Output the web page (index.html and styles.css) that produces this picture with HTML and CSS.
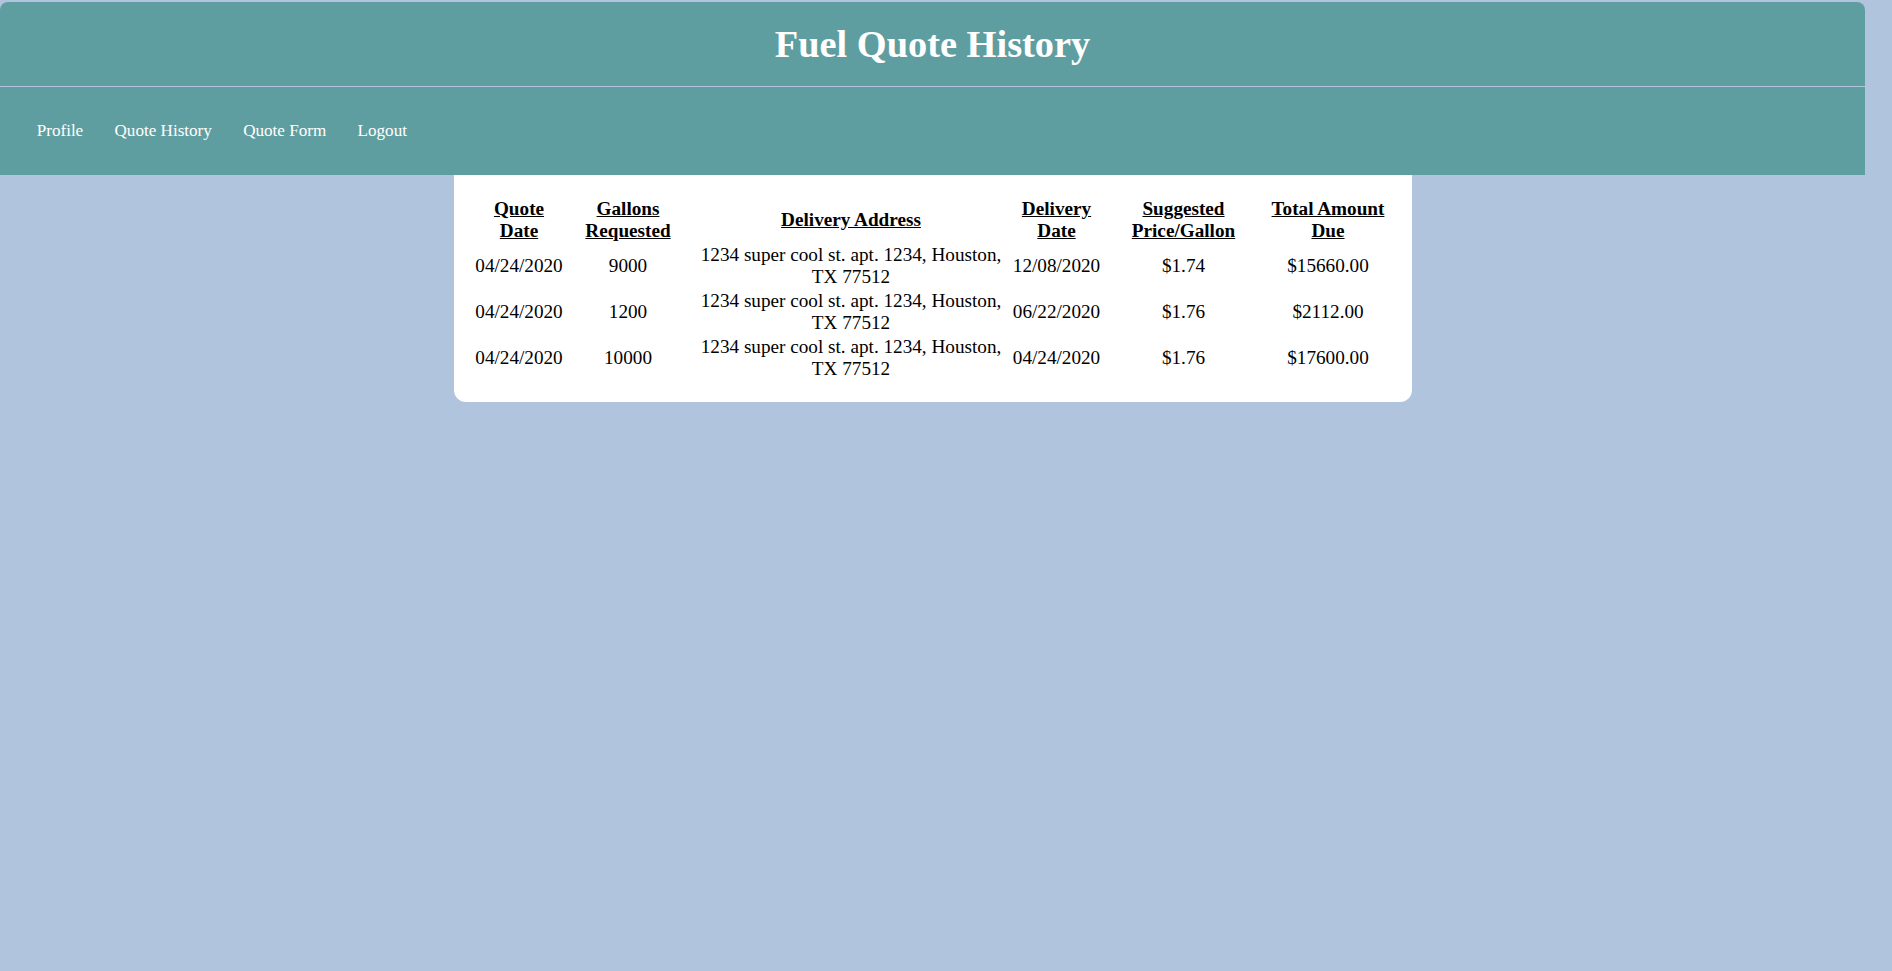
FILE: index.html
```html
<!DOCTYPE html>
<html lang="en">
<head>
<meta charset="utf-8">
<title>Fuel Quote History</title>
<link rel="stylesheet" href="styles.css">
</head>
<body>
<div class="page">
  <header class="site-header">
    <h1 class="title">Fuel Quote History</h1>
    <nav class="nav">
      <a href="#">Profile</a>
      <a href="#">Quote History</a>
      <a href="#">Quote Form</a>
      <a href="#">Logout</a>
    </nav>
  </header>
  <main class="card">
    <table class="history">
      <colgroup>
        <col class="col-qdate">
        <col class="col-gallons">
        <col class="col-address">
        <col class="col-ddate">
        <col class="col-price">
        <col class="col-total">
      </colgroup>
      <thead>
        <tr>
          <th>Quote Date</th>
          <th>Gallons Requested</th>
          <th>Delivery Address</th>
          <th>Delivery Date</th>
          <th>Suggested Price/Gallon</th>
          <th>Total Amount Due</th>
        </tr>
      </thead>
      <tbody>
        <tr>
          <td>04/24/2020</td>
          <td>9000</td>
          <td>1234 super cool st. apt. 1234, Houston, TX 77512</td>
          <td>12/08/2020</td>
          <td>$1.74</td>
          <td>$15660.00</td>
        </tr>
        <tr>
          <td>04/24/2020</td>
          <td>1200</td>
          <td>1234 super cool st. apt. 1234, Houston, TX 77512</td>
          <td>06/22/2020</td>
          <td>$1.76</td>
          <td>$2112.00</td>
        </tr>
        <tr>
          <td>04/24/2020</td>
          <td>10000</td>
          <td>1234 super cool st. apt. 1234, Houston, TX 77512</td>
          <td>04/24/2020</td>
          <td>$1.76</td>
          <td>$17600.00</td>
        </tr>
      </tbody>
    </table>
  </main>
</div>
</body>
</html>
```
FILE: styles.css
```css
html, body {
  margin: 0;
  background: #b0c4de;
}

body {
  font-family: "Liberation Serif", "Times New Roman", serif;
  min-height: 100vh;
  color: #000;
}

.page {
  margin-right: 27px;
  padding-top: 2px;
}

.site-header {
  background: #5f9ea0;
  border-radius: 8px 8px 0 0;
}

.title {
  margin: 0;
  padding: 20px 0;
  text-align: center;
  font-size: 38.4px;
  font-weight: bold;
  line-height: normal;
  color: #fff;
  border-bottom: 1px solid #b0c4de;
}

.nav {
  display: flex;
  gap: 31.3px;
  padding: 34px 0 34px 36.7px;
}

.nav a {
  color: #fff;
  text-decoration: none;
  font-size: 17.1px;
  line-height: normal;
}

.card {
  display: block;
  width: 958px;
  box-sizing: border-box;
  margin: 0 auto;
  padding: 22px 20px 21px;
  background: #fff;
  border-radius: 0 0 12px 12px;
}

.history {
  width: 100%;
  table-layout: fixed;
  border-collapse: separate;
  border-spacing: 0;
  font-size: 19.2px;
  line-height: normal;
}

.col-qdate { width: 91px; }
.col-gallons { width: 127px; }
.col-address { width: 319px; }
.col-ddate { width: 92px; }
.col-price { width: 162px; }
.col-total { width: 127px; }

.history th,
.history td {
  padding: 1px;
  text-align: center;
  vertical-align: middle;
}

.history th {
  font-weight: bold;
  text-decoration: underline;
}
```
